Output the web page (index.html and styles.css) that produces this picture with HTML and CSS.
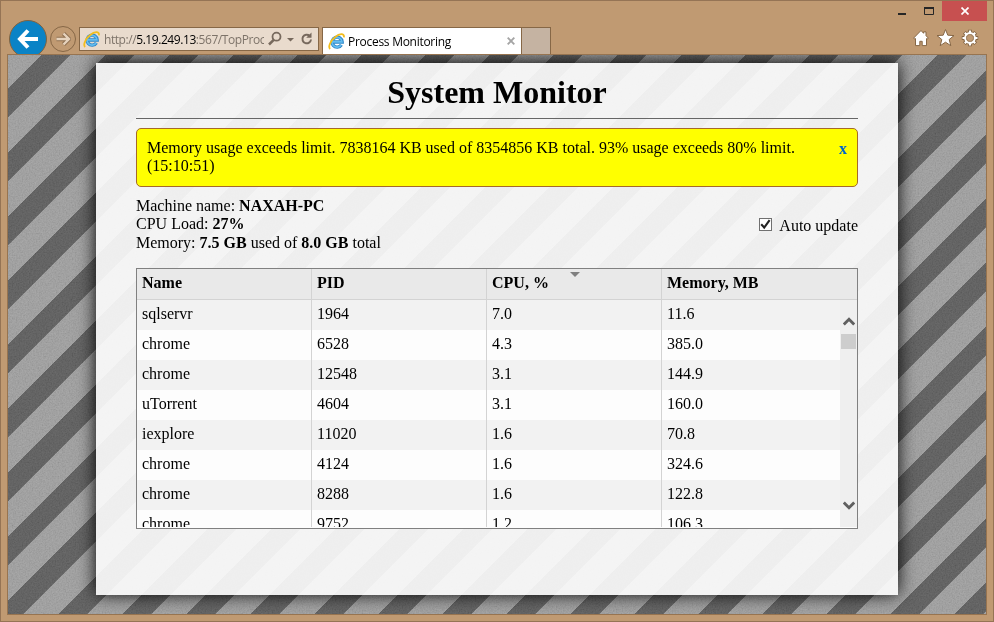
FILE: index.html
```html
<!DOCTYPE html>
<html lang="en">
<head>
<meta charset="utf-8">
<title>Process Monitoring</title>
<link rel="stylesheet" href="styles.css">
</head>
<body>
<svg class="defs" width="0" height="0" aria-hidden="true">
  <symbol id="ie" viewBox="0 0 16 16">
    <path d="M12.6 11.1a4.7 4.7 0 1 1 .7-2.7H4.4" fill="none" stroke="#2d86c8" stroke-width="3.2"/>
    <path d="M12.4 11.2a4.6 4.6 0 1 1 .7-2.9H4.4" fill="none" stroke="#63bdf0" stroke-width="1.6"/>
    <path d="M2 15C-.2 13.300 2.200 7.400 6.800 3.800C10.400.9 15.600-.5 15 4.200" fill="none" stroke="#f2bd1d" stroke-width="1.700"/>
  </symbol>
</svg>
<div class="window">
  <header class="chrome">
    <div class="nav">
      <span class="back"><svg width="22" height="22" viewBox="0 0 22 22"><path d="M11 2.500L3 11l8 8.500M3.500 11H21" fill="none" stroke="#fff" stroke-width="4"/></svg></span>
      <span class="forward"><svg width="16" height="16" viewBox="0 0 16 16"><path d="M8.500 2.500L14 8l-5.500 5.500M13.500 8H1.500" fill="none" stroke="#8f7051" stroke-width="4.400"/><path d="M8.500 2.500L14 8l-5.500 5.500M13.500 8H1.500" fill="none" stroke="#e6d3bd" stroke-width="2.400"/></svg></span>
      <div class="address">
        <svg class="ie" width="17" height="17"><use href="#ie"/></svg>
        <span class="url">http://<b>5.19.249.13</b>:567/TopProc</span>
        <svg class="tools" width="48" height="16" viewBox="0 0 48 16">
          <circle cx="8.500" cy="5.700" r="4" fill="none" stroke="#77695d" stroke-width="1.800"/>
          <path d="M5.700 8.800L1 13.500" stroke="#77695d" stroke-width="2.500"/>
          <path d="M19 7h7l-3.500 3.500z" fill="#77695d"/>
          <path d="M41.600 4.800A4.300 4.300 0 1 0 43 8.500" fill="none" stroke="#77695d" stroke-width="2"/>
          <path d="M43.500 1.500v5.300h-5.300z" fill="#77695d"/>
        </svg>
      </div>
      <div class="tab">
        <svg class="ie" width="17" height="17"><use href="#ie"/></svg>
        <span class="tab-title">Process Monitoring</span>
        <svg class="tab-close" width="8" height="8" viewBox="0 0 8 8"><path d="M.7.7l6.600 6.600M7.300.7L.7 7.300" stroke="#a5a5a5" stroke-width="1.900"/></svg>
      </div>
      <div class="new-tab"></div>
    </div>
    <div class="corner">
      <div class="controls">
        <svg width="50" height="20" viewBox="0 0 50 20"><path d="M6 13h8" stroke="#262626" stroke-width="2"/><path d="M32.500 6.500h9v7h-9z" fill="none" stroke="#262626"/><path d="M32 7h10" stroke="#262626" stroke-width="2"/></svg>
        <span class="close"><svg width="8" height="8" viewBox="0 0 8 8"><path d="M.5.500l7 7M7.500.5l-7 7" stroke="#fff" stroke-width="1.700"/></svg></span>
      </div>
      <svg class="actions" width="66" height="18" viewBox="0 0 66 18">
        <g fill="#fff" stroke="#866746" stroke-width="1" stroke-linejoin="round">
          <path d="M8 1.500L.7 9l.9 1.100L2.500 9.600v7h4.300v-4.300h2.400v4.300h4.300v-7l.9.500.9-1.100-2.300-2.300V2.900h-2.400v1.400z"/>
          <path d="M32.500.5l2.300 5.700 6.200.4-4.800 3.900 1.600 6.200-5.300-3.500-5.300 3.500 1.600-6.200L24 6.600l6.200-.4z"/>
        </g>
        <g fill="none">
          <path d="M57 .8v16.400M48.800 9h16.400M51.300 3.300l11.400 11.400M51.300 14.700L62.700 3.300" stroke="#866746" stroke-width="4"/>
          <circle cx="57" cy="9" r="4.700" stroke="#866746" stroke-width="4.200"/>
          <path d="M57 1.500v15M49.500 9h15M51.800 3.800l10.400 10.400M51.800 14.200L62.200 3.800" stroke="#fff" stroke-width="2.200"/>
          <circle cx="57" cy="9" r="4.800" stroke="#fff" stroke-width="2.200"/>
        </g>
        <circle cx="57" cy="9" r="3.600" fill="#c09a72" stroke="#866746" stroke-width=".7"/>
      </svg>
    </div>
  </header>
  <main class="page">
    <svg class="grain" width="978" height="559" aria-hidden="true">
      <filter id="noise" x="0" y="0" width="100%" height="100%"><feTurbulence type="fractalNoise" baseFrequency=".7" numOctaves="2" seed="4"/><feColorMatrix values="1 0 0 0 0  1 0 0 0 0  1 0 0 0 0  0 0 0 0 1"/></filter>
      <rect width="978" height="559" filter="url(#noise)"/>
    </svg>
    <section class="card">
      <h1>System Monitor</h1>
      <div class="alert"><p>Memory usage exceeds limit. 7838164 KB used of 8354856 KB total. 93% usage exceeds 80% limit. (15:10:51)</p><a class="dismiss">x</a></div>
      <div class="summary">
        <div class="machine">
          <div>Machine name: <b>NAXAH-PC</b></div>
          <div>CPU Load: <b>27%</b></div>
          <div>Memory: <b>7.5 GB</b> used of <b>8.0 GB</b> total</div>
        </div>
        <label class="auto"><span class="check"><svg width="11" height="11" viewBox="0 0 11 11"><path d="M1.200 5.300l3 3.200L9.600 1.200" fill="none" stroke="#222" stroke-width="2.100"/></svg></span>Auto update</label>
      </div>
      <div class="grid">
        <div class="row head"><span>Name</span><span>PID</span><span class="sorted">CPU, %</span><span>Memory, MB</span></div>
        <div class="body">
          <div class="rows">
            <div class="row"><span>sqlservr</span><span>1964</span><span>7.0</span><span>11.6</span></div>
            <div class="row"><span>chrome</span><span>6528</span><span>4.3</span><span>385.0</span></div>
            <div class="row"><span>chrome</span><span>12548</span><span>3.1</span><span>144.9</span></div>
            <div class="row"><span>uTorrent</span><span>4604</span><span>3.1</span><span>160.0</span></div>
            <div class="row"><span>iexplore</span><span>11020</span><span>1.6</span><span>70.8</span></div>
            <div class="row"><span>chrome</span><span>4124</span><span>1.6</span><span>324.6</span></div>
            <div class="row"><span>chrome</span><span>8288</span><span>1.6</span><span>122.8</span></div>
            <div class="row"><span>chrome</span><span>9752</span><span>1.2</span><span>106.3</span></div>
          </div>
          <div class="scroll">
            <svg width="12" height="9" viewBox="0 0 12 9"><path d="M.8 7.500L6 2.300l5.200 5.200" fill="none" stroke="#606060" stroke-width="2.900"/></svg>
            <span class="thumb"></span>
            <svg class="down" width="12" height="9" viewBox="0 0 12 9"><path d="M.8 1.500L6 6.700l5.200-5.200" fill="none" stroke="#606060" stroke-width="2.900"/></svg>
          </div>
        </div>
      </div>
    </section>
  </main>
</div>
</body>
</html>
```
FILE: styles.css
```css
* { box-sizing: border-box; }
body { margin: 0; font: 16px/18px "Liberation Serif", serif; color: #000; }
.defs { position: absolute; }
.window { width: 994px; height: 622px; display: flex; flex-direction: column; background: #c09a72; border: 1px solid #957455; overflow: hidden; }
.chrome { height: 53px; display: flex; justify-content: space-between; }
.nav { display: flex; align-items: flex-start; padding-left: 8px; }
.back { width: 38px; height: 38px; margin-top: 19px; border: 1px solid #80623f; border-radius: 50%; background: #0a83c6; display: flex; align-items: center; justify-content: center; }
.forward { width: 26px; height: 26px; margin: 25px 0 0 3px; border: 1px solid #866746; border-radius: 50%; display: flex; align-items: center; justify-content: center; }
.address { width: 240px; height: 24px; margin: 26px 0 0 3px; padding-left: 3px; border: 1px solid #866746; background: #e9dbcd; display: flex; align-items: center; }
.url { width: 160px; margin: 2px 0 0 4px; overflow: hidden; white-space: nowrap; font: 12px/20px "Open Sans", sans-serif; letter-spacing: -.43px; color: #7d7369; }
.url b { font-weight: 400; color: #000; }
.tools { margin-left: 4px; }
.ie { flex: none; }
.tab { width: 200px; height: 27px; margin: 26px 0 0 3px; padding: 0 6px 0 5px; border: 1px solid #866746; border-bottom: 0; background: #fff; display: flex; align-items: center; }
.tab-title { margin: 2px 0 0 3px; font: 12px/20px "Open Sans", sans-serif; letter-spacing: -.28px; white-space: nowrap; }
.tab-close { margin-left: auto; }
.new-tab { width: 29px; height: 27px; margin-top: 26px; border: 1px solid #866746; border-width: 1px 1px 0 0; background: #c5b3a2; }
.corner { display: flex; flex-direction: column; align-items: flex-end; padding-right: 6px; }
.controls { display: flex; }
.close { width: 45px; height: 20px; background: #c75050; display: flex; align-items: center; justify-content: center; }
.actions { margin: 8px 8px 0 0; }
.page { position: relative; width: 980px; height: 561px; margin-left: 6px; padding: 8px 0 0 88px; border: 1px solid #977450; overflow: hidden; background: repeating-linear-gradient(135deg, #979797 0 23.500px, #5b5b5b 23.800px 43.800px, #979797 44.100px 45.255px); }
.grain { position: absolute; inset: 0; opacity: .2; mix-blend-mode: overlay; }
.card { position: relative; width: 802px; height: 532px; padding: 0 40px; background: rgba(252,252,252,.915); box-shadow: 0 -1px 17px #000; }
h1 { height: 56px; margin: 0; padding-top: 11px; border-bottom: 1px solid #666; font-size: 32px; line-height: 36px; text-align: center; }
.alert { height: 59px; margin-top: 9px; padding: 10px; border: 1px solid #a5692a; border-radius: 5px; background: #ff0; display: flex; justify-content: space-between; }
.alert p { width: 670px; margin: 0; }
.dismiss { margin-top: 1px; color: #0066cc; font-weight: 700; }
.summary { height: 81px; padding-top: 10px; display: flex; justify-content: space-between; }
.machine { line-height: 18.400px; }
.auto { margin-top: 20px; display: flex; }
.check { width: 13px; height: 13px; margin: 1px 7px 0 0; border: 1px solid #707070; background: #fff; display: flex; }
.grid { width: 722px; height: 261px; border: 1px solid #808080; background: #fdfdfd; }
.row { display: grid; grid-template-columns: 175px 175px 175px 1fr; height: 30px; line-height: 28px; }
.row span { padding-left: 5px; border-right: 1px solid #d3d3d3; }
.row span:last-child { border-right: 0; }
.head { height: 31px; background: #e9e9e9; border-bottom: 1px solid #d3d3d3; font-weight: 700; }
.sorted::after { content: ""; float: right; width: 0; height: 0; margin: 3px 81px 0 0; border: 5px solid transparent; border-top-color: #808080; border-bottom: 0; }
.body { height: 227px; display: flex; overflow: hidden; }
.rows { flex: 1; }
.rows .row:nth-child(odd) { background: #f2f2f2; }
.scroll { width: 17px; height: 227px; padding-top: 17px; background: #efefef; display: flex; flex-direction: column; align-items: center; }
.thumb { width: 15px; height: 15px; margin-top: 8px; background: #cdcdcd; }
.down { margin-top: auto; margin-bottom: 17px; }
```
